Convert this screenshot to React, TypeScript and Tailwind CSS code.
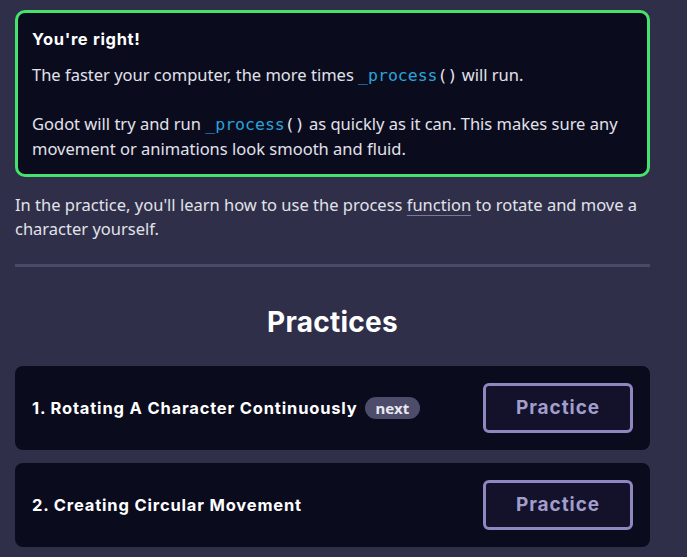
import React from "react";

const practices = [
  { title: "1. Rotating A Character Continuously", next: true },
  { title: "2. Creating Circular Movement", next: false },
];

const Code: React.FC<{ name: string }> = ({ name }) => (
  <code className="font-['DejaVu_Sans_Mono',monospace] text-[16.5px]">
    <span className="text-[#2aa3d8]">{name}</span>
    <span className="text-[#e6e6ee]">()</span>
  </code>
);

export default function App() {
  return (
    <div className="min-h-screen bg-[#2f2f49] font-['Noto_Sans',sans-serif] text-[#e2e2ea]">
      <div className="w-[650px] pl-[15px] pt-[10px]">
        <div className="rounded-[10px] border-[3px] border-[#45e36d] bg-[#0b0b1e] px-[14px] pt-[14px] pb-[13px] text-[16.5px] leading-[24px]">
          <div className="font-['Inter',sans-serif] font-bold tracking-[0.04em] text-white">You're right!</div>
          <p className="mt-[12px]">
            The faster your computer, the more times <Code name="_process" /> will run.
          </p>
          <p className="mt-[24px]">
            Godot will try and run <Code name="_process" /> as quickly as it can. This makes sure any movement or
            animations look smooth and fluid.
          </p>
        </div>

        <p className="mt-[16px] text-[16.5px] leading-[24px]">
          In the practice, you'll learn how to use the process{" "}
          <span className="underline decoration-[#7a7896] underline-offset-[4px]">function</span> to rotate and move a
          character yourself.
        </p>

        <div className="mt-[23px] h-[3px] bg-[#4a4966]" />

        <h2 className="mt-[37px] text-center font-['Inter',sans-serif] text-[28px] font-bold leading-[36px] tracking-[0.01em] text-white">
          Practices
        </h2>

        <div className="mt-[26px] flex flex-col gap-[13px]">
          {practices.map((p) => (
            <div
              key={p.title}
              className="flex h-[84px] items-center justify-between rounded-[8px] bg-[#0b0b1e] pl-[17px] pr-[17px]"
            >
              <div className="flex items-center gap-[7px]">
                <span className="font-['Inter',sans-serif] text-[16.5px] font-bold tracking-[0.05em] text-white">
                  {p.title}
                </span>
                {p.next && (
                  <span className="rounded-full bg-[#4d4c6b] px-[11px] py-[1px] font-['Noto_Sans',sans-serif] text-[15px] font-bold leading-[20px] text-[#e8e8f0]">
                    next
                  </span>
                )}
              </div>
              <button className="h-[50px] w-[150px] rounded-[6px] border-[3px] border-[#8e88c0] bg-[#13122a] font-['Inter',sans-serif] text-[19px] font-bold tracking-[0.05em] text-[#a19dcc]">
                Practice
              </button>
            </div>
          ))}
        </div>
      </div>
    </div>
  );
}
